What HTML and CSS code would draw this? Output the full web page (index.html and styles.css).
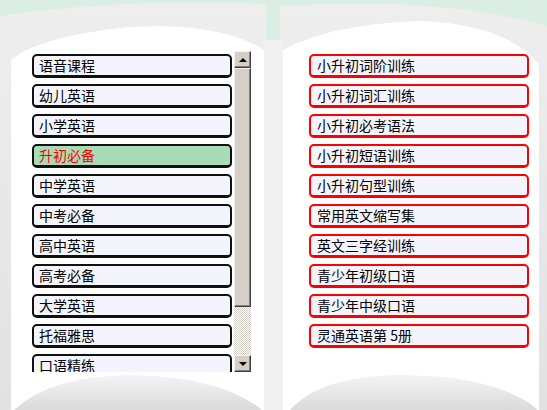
FILE: index.html
```html
<!DOCTYPE html>
<html lang="zh-CN">
<head>
    <meta charset="UTF-8">
    <meta name="viewport" content="width=device-width, initial-scale=1.0">
    <title>英语课程</title>
    <link rel="stylesheet" href="styles.css">
</head>
<body>
    <div class="book">
        <!-- open book drawn behind the menus -->
        <svg class="book-art" viewBox="0 0 547 410" width="547" height="410">
            <defs>
                <linearGradient id="edge" x1="0" y1="0" x2="0" y2="1">
                    <stop offset="0" stop-color="#eeeeee"/>
                    <stop offset="1" stop-color="#e2e2e2"/>
                </linearGradient>
                <linearGradient id="hump" x1="0" y1="0" x2="0" y2="1">
                    <stop offset="0" stop-color="#f4f4f4"/>
                    <stop offset="1" stop-color="#dadada"/>
                </linearGradient>
            </defs>
            <rect width="547" height="410" fill="#dbeee3"/>
            <path d="M0 16 Q120 -2 266 4 L266 410 L0 410 Z" fill="url(#edge)"/>
            <path d="M280 6 Q440 -4 547 26 L547 410 L280 410 Z" fill="url(#edge)"/>
            <path d="M11 60 Q40 36 130 27 Q220 22 264 50 L264 410 L11 410 Z" fill="#ffffff"/>
            <path d="M283 50 Q330 24 420 21 Q505 24 539 64 L539 410 L283 410 Z" fill="#ffffff"/>
            <rect x="264" y="40" width="19" height="370" fill="#f1f1f1"/>
            <path d="M14 410 Q50 376 130 375 Q220 376 262 410 Z" fill="url(#hump)"/>
            <path d="M290 410 Q320 376 400 375 Q500 376 538 410 Z" fill="url(#hump)"/>
        </svg>

        <div class="shelf">
            <div class="menu">
                <ul class="menu-list">
                    <li class="item">语音课程</li>
                    <li class="item">幼儿英语</li>
                    <li class="item">小学英语</li>
                    <li class="item selected">升初必备</li>
                    <li class="item">中学英语</li>
                    <li class="item">中考必备</li>
                    <li class="item">高中英语</li>
                    <li class="item">高考必备</li>
                    <li class="item">大学英语</li>
                    <li class="item">托福雅思</li>
                    <li class="item">口语精练</li>
                </ul>
                <div class="scrollbar">
                    <div class="sb-btn"><span class="arrow-up"></span></div>
                    <div class="sb-thumb"></div>
                    <div class="sb-track"></div>
                    <div class="sb-btn"><span class="arrow-down"></span></div>
                </div>
            </div>

            <ul class="lessons">
                <li class="item lesson">小升初词阶训练</li>
                <li class="item lesson">小升初词汇训练</li>
                <li class="item lesson">小升初必考语法</li>
                <li class="item lesson">小升初短语训练</li>
                <li class="item lesson">小升初句型训练</li>
                <li class="item lesson">常用英文缩写集</li>
                <li class="item lesson">英文三字经训练</li>
                <li class="item lesson">青少年初级口语</li>
                <li class="item lesson">青少年中级口语</li>
                <li class="item lesson">灵通英语第 5册</li>
            </ul>
        </div>
    </div>
</body>
</html>
```

FILE: styles.css
```css
body {
    margin: 0;
    font-family: "Noto Sans CJK SC", "Noto Sans", sans-serif;
    font-size: 14px;
    background: #dbeee3;
}
.book {
    position: relative;
    width: 547px;
    height: 410px;
    overflow: hidden;
}
.book-art {
    position: absolute;
    left: 0;
    top: 0;
    display: block;
}
.shelf {
    position: relative;
    display: flex;
    padding: 51px 0 0 32px;
}
ul {
    list-style: none;
    margin: 0;
    padding: 0;
}
.menu {
    display: flex;
    height: 321px;
}
.menu-list {
    width: 200px;
    padding-top: 3px;
    display: flex;
    flex-direction: column;
    gap: 6px;
    overflow: hidden;
}
.item {
    flex: none;
    box-sizing: border-box;
    height: 24px;
    border: 2px solid #111;
    border-bottom-width: 3px;
    border-radius: 5px;
    background: #f4f4fd;
    padding-left: 5px;
    line-height: 19px;
    color: #000;
    white-space: nowrap;
}
.item.selected {
    background: #a8dcb7;
    color: #ff0000;
}

/* classic windows scrollbar */
.scrollbar {
    width: 17px;
    margin-left: 2px;
    display: flex;
    flex-direction: column;
}
.sb-btn, .sb-thumb {
    box-sizing: border-box;
    background: #d4d0c8;
    border: 1px solid;
    border-color: #f4f3ef #404040 #404040 #f4f3ef;
    box-shadow: inset -1px -1px 0 #808080;
}
.sb-btn {
    height: 17px;
    display: flex;
    align-items: center;
    justify-content: center;
}
.sb-thumb {
    height: 239px;
}
.sb-track {
    flex: 1;
    background-color: #ffffff;
    background-image: repeating-conic-gradient(#d4d0c8 0 25%, #ffffff 0 50%);
    background-size: 2px 2px;
}
.arrow-up, .arrow-down {
    width: 0;
    height: 0;
    border-left: 4px solid transparent;
    border-right: 4px solid transparent;
}
.arrow-up {
    border-bottom: 4px solid #000;
}
.arrow-down {
    border-top: 4px solid #000;
}

.lessons {
    margin-left: 58px;
    width: 220px;
    padding-top: 3px;
    display: flex;
    flex-direction: column;
    gap: 6px;
}
.lesson {
    border-color: #ff0000;
    padding-left: 6px;
}
```
